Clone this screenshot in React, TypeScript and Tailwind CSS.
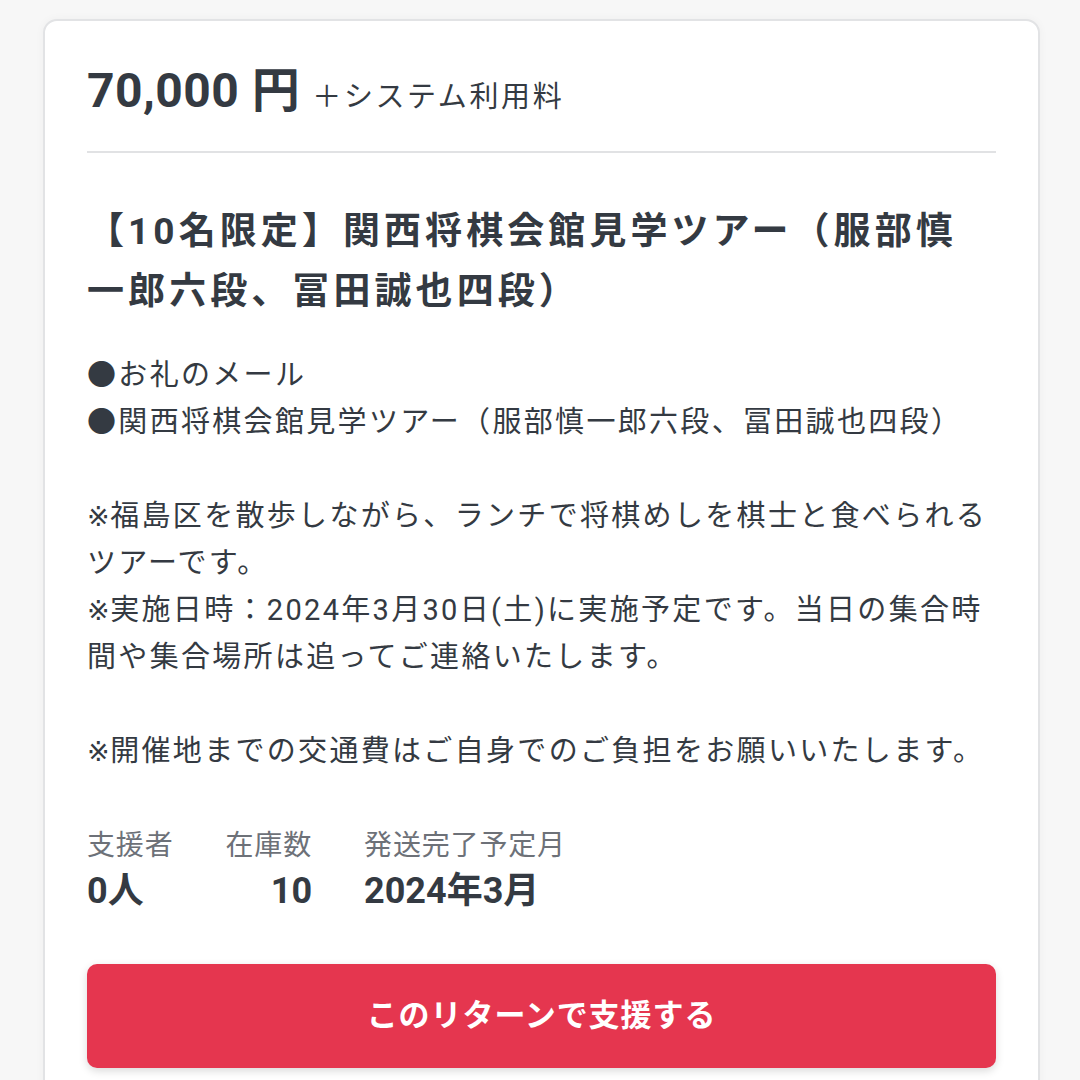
import React from "react";

const font = { fontFamily: '"Roboto", "Noto Sans CJK JP", sans-serif' };

function Mark() {
  return <span className="[font-family:'DejaVu_Sans',sans-serif] text-[27px] leading-none tracking-[0.02em]">※</span>;
}

export default function App() {
  return (
    <div className="min-h-[1080px] w-[1080px] overflow-hidden bg-[#f7f7f7] pt-[19px]" style={font}>
      <div className="ml-[43px] w-[997px] h-[1100px] rounded-t-[14px] border-2 border-[#e2e3e5] bg-white px-[42px] pt-[50px] text-[#343a42] shadow-[0_0_10px_rgba(0,0,0,0.04)]">
        <div className="flex items-baseline gap-[12px] pb-[34px] border-b-2 border-[#e1e2e4]">
          <span className="text-[48px] font-bold leading-[40px] tracking-[0.01em]">70,000 円</span>
          <span className="text-[29px] leading-[40px] tracking-[0.09em]">＋システム利用料</span>
        </div>
        <h2 className="mt-[49px] text-[37px] font-bold leading-[60px] tracking-[0.11em]">
          【10名限定】関西将棋会館見学ツアー（服部慎一郎六段、冨田誠也四段）
        </h2>
        <div className="mt-[30px] text-[29px] leading-[47px] tracking-[0.08em]">
          <p>●お礼のメール</p>
          <p>●関西将棋会館見学ツアー（服部慎一郎六段、冨田誠也四段）</p>
          <p className="h-[47px]"></p>
          <p><Mark />福島区を散歩しながら、ランチで将棋めしを棋士と食べられるツアーです。</p>
          <p><Mark />実施日時：2024年3月30日(土)に実施予定です。当日の集合時間や集合場所は追ってご連絡いたします。</p>
          <p className="h-[47px]"></p>
          <p><Mark />開催地までの交通費はご自身でのご負担をお願いいたします。</p>
        </div>
        <div className="mt-[50px] flex gap-[52px]">
          <div className="flex flex-col">
            <span className="text-[28px] leading-[42px] text-[#6d7178] tracking-[0.03em]">支援者</span>
            <span className="text-[36px] font-bold leading-[48px]">0人</span>
          </div>
          <div className="flex flex-col items-end">
            <span className="text-[28px] leading-[42px] text-[#6d7178] tracking-[0.03em]">在庫数</span>
            <span className="text-[36px] font-bold leading-[48px]">10</span>
          </div>
          <div className="flex flex-col">
            <span className="text-[28px] leading-[42px] text-[#6d7178] tracking-[0.03em]">発送完了予定月</span>
            <span className="text-[36px] font-bold leading-[48px]">2024年3月</span>
          </div>
        </div>
        <button className="mt-[49px] flex h-[104px] w-full items-center justify-center rounded-[10px] bg-[#e5364f] text-[31px] font-bold tracking-[0.03em] text-white shadow-[0_3px_8px_rgba(0,0,0,0.15)]">
          このリターンで支援する
        </button>
      </div>
    </div>
  );
}
